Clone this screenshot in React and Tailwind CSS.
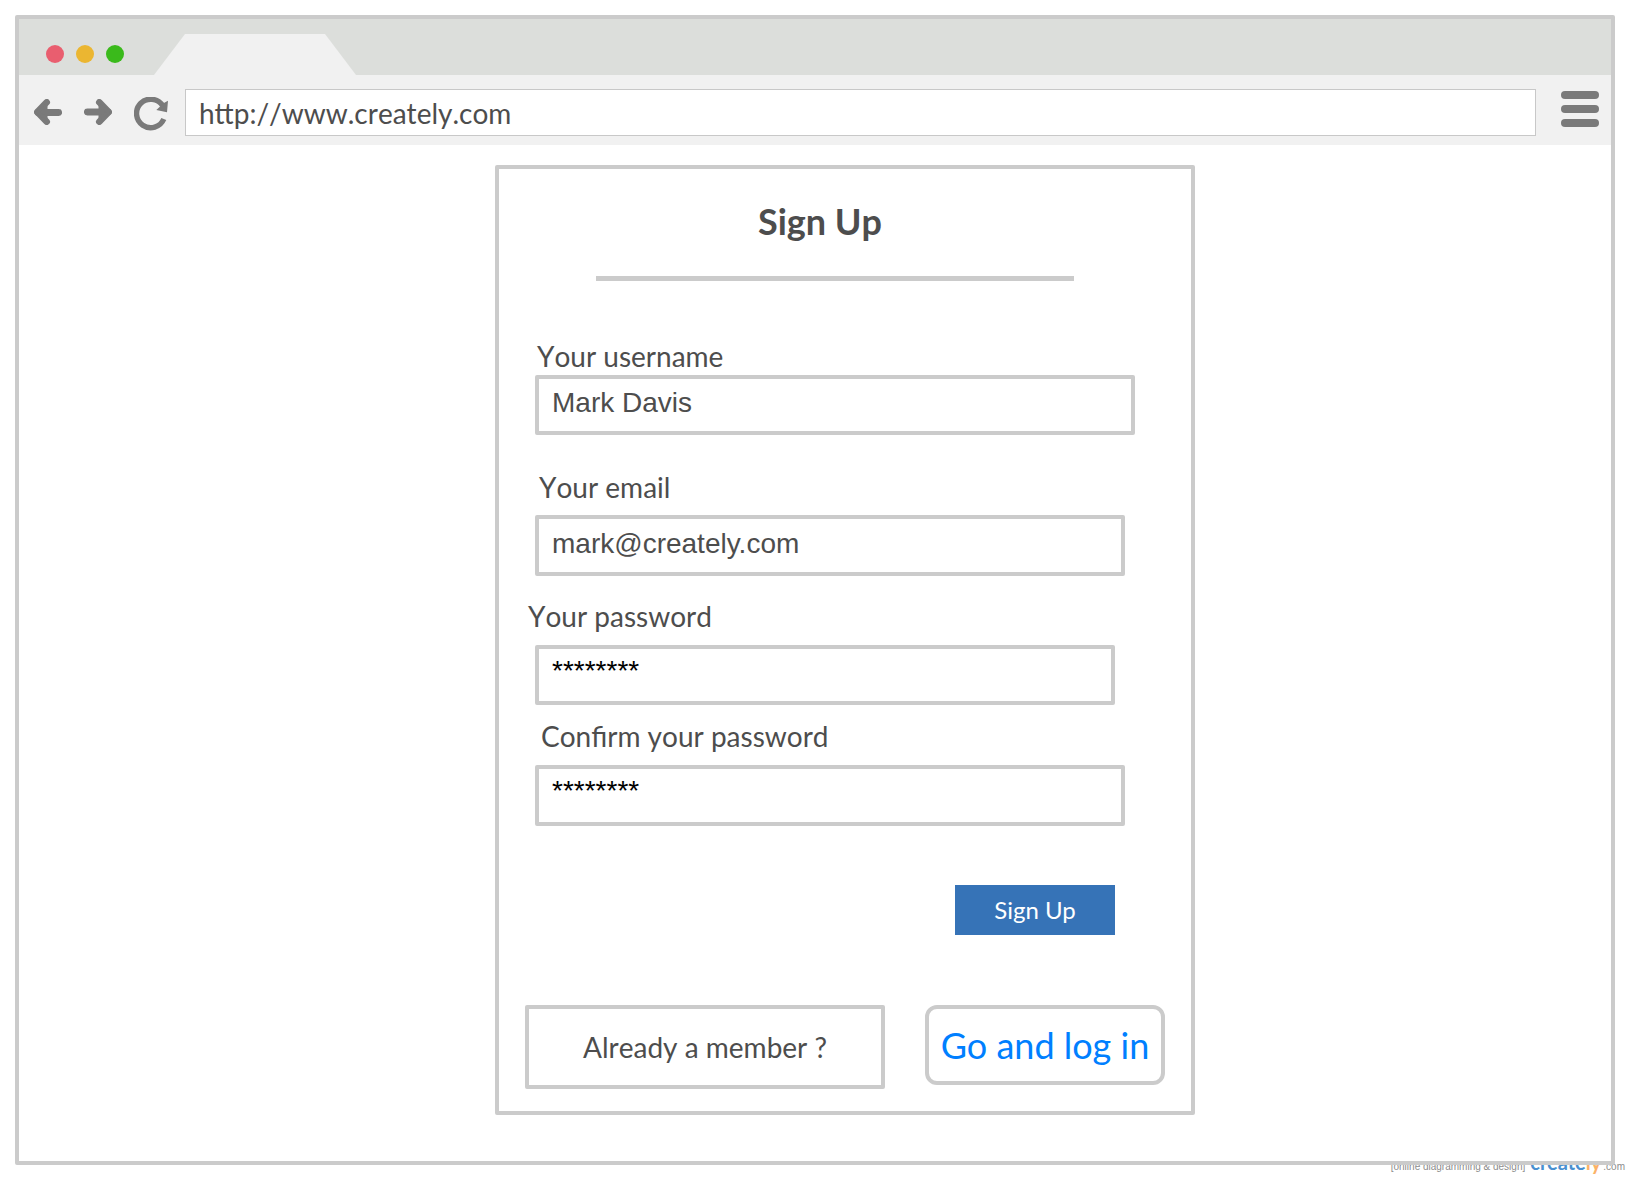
const fields = [
  { id: "username", label: "Your username", value: "Mark Davis", labelCls: "pl-[12px] pb-px", inputCls: "max-w-[600px] h-[60px] pt-2 pb-3 text-[#4d4d4d]", gapCls: "" },
  { id: "email", label: "Your email", value: "mark@creately.com", labelCls: "pl-[14px] pb-[10px]", inputCls: "max-w-[590px] h-[61px] pt-[9px] pb-3 text-[#4d4d4d]", gapCls: "mt-[34px]" },
  { id: "password", label: "Your password", value: "********", labelCls: "pl-[3px] pb-[11px]", inputCls: "max-w-[580px] h-[60px] pt-[6px] pb-[14px] text-black", gapCls: "mt-[22px]" },
  { id: "confirm", label: "Confirm your password", value: "********", labelCls: "pl-4 pb-[11px]", inputCls: "max-w-[590px] h-[61px] pt-[6px] pb-[15px] text-black", gapCls: "mt-[13px]" },
];

function Field({ id, label, value, labelCls, inputCls, gapCls }) {
  return (
    <div className={`flex flex-col ${gapCls}`}>
      <label htmlFor={id} className={`text-[28px] leading-9 [font-kerning:none] ${labelCls}`}>{label}</label>
      <div className="flex pl-[10px]">
        <input
          id={id}
          type="text"
          defaultValue={value}
          className={`w-full rounded-xs border-4 border-[#cbcbcb] bg-white pl-[13px] font-['Liberation_Sans',sans-serif] text-[28px] leading-8 outline-none ${inputCls}`}
        />
      </div>
    </div>
  );
}

function Chrome() {
  return (
    <header>
      <div className="flex h-14 items-end bg-[#dcdedb]">
        <div className="flex gap-3 self-center pt-[14px] pl-[27px]">
          <span className="size-[18px] rounded-full bg-[#e95e6f]" />
          <span className="size-[18px] rounded-full bg-[#ebb631]" />
          <span className="size-[18px] rounded-full bg-[#3aba1b]" />
        </div>
        <svg className="ml-[30px]" width="202" height="41" viewBox="0 0 202 41" aria-hidden="true">
          <path d="M0 41 31 0H171L202 41Z" fill="#f1f1f1" />
        </svg>
      </div>
      <div className="flex h-[70px] bg-[#f1f1f1] pt-[14px] pr-3 pl-[15px]">
        <button type="button" aria-label="Back" className="mt-[10px] h-[26px] w-7 shrink-0">
          <svg width="28" height="26" viewBox="0 0 28 26" fill="none" stroke="#7a7a7a" strokeLinecap="round" strokeLinejoin="round">
            <path d="M4 13.5H24.7" strokeWidth="6.8" />
            <path d="M12.7 3.3 3.3 13 12.7 22.7" strokeWidth="6.6" />
            <path d="M3.3 13 12 7V19Z" fill="#7a7a7a" strokeWidth="3" />
          </svg>
        </button>
        <button type="button" aria-label="Forward" className="mt-[10px] ml-[22px] h-[26px] w-7 shrink-0">
          <svg width="28" height="26" viewBox="0 0 28 26" fill="none" stroke="#7a7a7a" strokeLinecap="round" strokeLinejoin="round">
            <path d="M24 13H3.3" strokeWidth="6.8" />
            <path d="M15.3 3.3 24.7 13 15.3 22.7" strokeWidth="6.6" />
            <path d="M24.7 13 16 7V19Z" fill="#7a7a7a" strokeWidth="3" />
          </svg>
        </button>
        <button type="button" aria-label="Reload" className="mt-2 ml-[22px] h-[34px] w-[34px] shrink-0">
          <svg width="34" height="34" viewBox="0 0 34 34">
            <path d="M29.8 22A14.2 14.2 0 1 1 28.6 8.6" fill="none" stroke="#7a7a7a" strokeWidth="5.4" />
            <path d="M34 3.8 33 15.2 22.3 13 25 10.6 29 6.4 32.6 4.4Z" fill="#7a7a7a" />
          </svg>
        </button>
        <input
          type="text"
          aria-label="Address"
          defaultValue="http://www.creately.com"
          className="ml-[17px] h-[47px] min-w-0 flex-1 border border-[#c8c8c8] bg-white pl-[13px] text-[28px] outline-none [font-kerning:none]"
        />
        <button type="button" aria-label="Menu" className="mt-[2px] ml-[25px] flex h-9 w-[38px] shrink-0 flex-col gap-[6px]">
          <span className="h-2 w-full rounded-full bg-[#7a7a7a]" />
          <span className="h-2 w-full rounded-full bg-[#7a7a7a]" />
          <span className="h-2 w-full rounded-full bg-[#7a7a7a]" />
        </button>
      </div>
    </header>
  );
}

export default function App() {
  return (
    <div className="min-h-screen overflow-hidden bg-white p-[15px] pb-0 font-['Lato',sans-serif] text-[#4d4d4d]">
      <div className="relative z-10 rounded-xs border-4 border-[#cbcbcb] bg-white">
        <Chrome />
        <main className="flex justify-center pt-5 pb-[46px] pl-[60px]">
          <form className="w-full max-w-[700px] rounded-xs border-4 border-[#cbcbcb] pt-[30px] pr-[26px] pb-[22px] pl-[26px]">
            <h1 className="pr-[50px] text-center text-[36px] leading-[44px] font-bold [font-kerning:none]">Sign Up</h1>
            <hr className="mt-[33px] mr-[91px] mb-[57px] ml-[71px] border-t-5 border-[#cbcbcb]" />
            {fields.map((f) => (
              <Field key={f.id} {...f} />
            ))}
            <div className="mt-[59px] flex justify-end pr-[50px]">
              <button type="submit" className="h-[50px] w-40 bg-[#3673b7] text-[24px] text-white">Sign Up</button>
            </div>
            <div className="mt-[70px] flex items-start justify-between gap-10">
              <p className="flex h-[84px] flex-1 items-center justify-center rounded-xs border-4 border-[#cbcbcb] text-[28px] [font-kerning:none]">
                Already a member ?
              </p>
              <a href="#login" className="flex h-20 w-60 shrink-0 items-center justify-center rounded-xl border-4 border-[#cbcbcb] text-[36px] whitespace-nowrap text-[#007fff]">
                Go and log in
              </a>
            </div>
          </form>
        </main>
      </div>
      <footer className="-mt-4 -mr-[10px] flex h-[26px] items-baseline justify-end font-['Liberation_Sans',sans-serif] text-[10px] leading-[26px] text-[#8c8c8c]">
        <span>[online diagramming &amp; design]</span>
        <span className="ml-[5px] font-['Lato',sans-serif] text-[20px] font-bold text-[#4a90d0]">
          create<span className="text-[#fbb268]">ly</span>
        </span>
        <span className="ml-[2px]">.com</span>
      </footer>
    </div>
  );
}
